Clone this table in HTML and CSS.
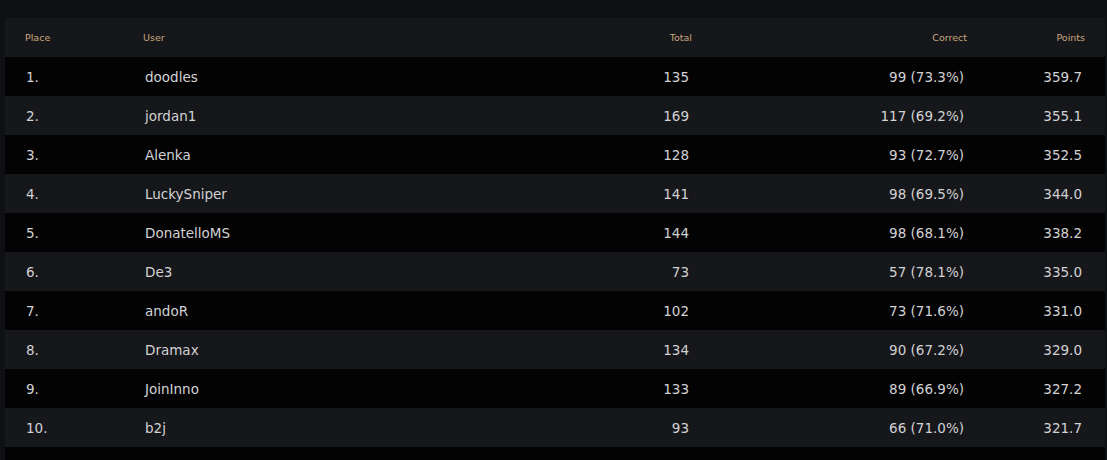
FILE: index.html
```html
<!DOCTYPE html>
<html>
<head>
<meta charset="utf-8">
<link rel="stylesheet" href="styles.css">
</head>
<body>
<div class="board">
<table class="ranking">
<colgroup>
<col class="c-place"><col class="c-user"><col class="c-total"><col class="c-correct"><col class="c-points">
</colgroup>
<thead>
<tr><th class="left">Place</th><th class="left">User</th><th>Total</th><th>Correct</th><th>Points</th></tr>
</thead>
<tbody>
<tr><td class="left">1.</td><td class="left user">doodles</td><td>135</td><td>99 (73.3%)</td><td>359.7</td></tr>
<tr><td class="left">2.</td><td class="left user">jordan1</td><td>169</td><td>117 (69.2%)</td><td>355.1</td></tr>
<tr><td class="left">3.</td><td class="left user">Alenka</td><td>128</td><td>93 (72.7%)</td><td>352.5</td></tr>
<tr><td class="left">4.</td><td class="left user">LuckySniper</td><td>141</td><td>98 (69.5%)</td><td>344.0</td></tr>
<tr><td class="left">5.</td><td class="left user">DonatelloMS</td><td>144</td><td>98 (68.1%)</td><td>338.2</td></tr>
<tr><td class="left">6.</td><td class="left user">De3</td><td>73</td><td>57 (78.1%)</td><td>335.0</td></tr>
<tr><td class="left">7.</td><td class="left user">andoR</td><td>102</td><td>73 (71.6%)</td><td>331.0</td></tr>
<tr><td class="left">8.</td><td class="left user">Dramax</td><td>134</td><td>90 (67.2%)</td><td>329.0</td></tr>
<tr><td class="left">9.</td><td class="left user">JoinInno</td><td>133</td><td>89 (66.9%)</td><td>327.2</td></tr>
<tr><td class="left">10.</td><td class="left user">b2j</td><td>93</td><td>66 (71.0%)</td><td>321.7</td></tr>
<tr class="tail"><td></td><td></td><td></td><td></td><td></td></tr>
</tbody>
</table>
</div>
</body>
</html>
```
FILE: styles.css
```css
html, body {
  margin: 0;
  padding: 0;
  background: #0f1013;
  font-family: "DejaVu Sans", Verdana, sans-serif;
}
.board {
  padding: 18px 2px 0 5px;
}
.ranking {
  width: 1100px;
  border-collapse: collapse;
  table-layout: fixed;
}
.c-place { width: 118px; }
.c-user { width: 377px; }
.c-total { width: 212px; }
.c-correct { width: 275px; }
.c-points { width: 118px; }
.ranking th {
  height: 39px;
  padding: 0 20px;
  background: #16171b;
  color: #c9a77c;
  font-size: 9.5px;
  font-weight: normal;
  text-align: right;
}
.ranking td {
  height: 39px;
  padding: 0 23px 0 21px;
  color: #d2d2d4;
  font-size: 13.5px;
  text-align: right;
}
.ranking th.left, .ranking td.left {
  text-align: left;
}
.ranking td.user {
  padding-left: 22px;
}
.ranking tbody tr:nth-child(odd) td { background: #030304; }
.ranking tbody tr:nth-child(even) td { background: #16171b; }
```
